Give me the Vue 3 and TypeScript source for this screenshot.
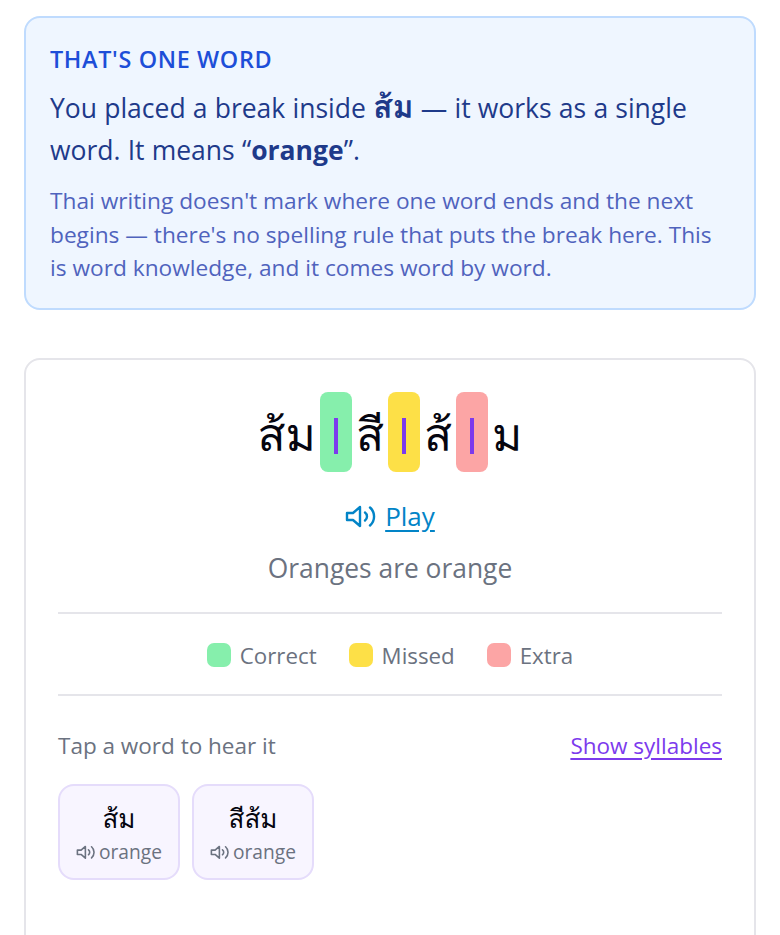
<script setup lang="ts">
interface Tile { thai: string; en: string }
const tiles: Tile[] = [
  { thai: 'ส้ม', en: 'orange' },
  { thai: 'สีส้ม', en: 'orange' },
]
const legend = [
  { label: 'Correct', cls: 'green' },
  { label: 'Missed', cls: 'yellow' },
  { label: 'Extra', cls: 'red' },
]
</script>

<template>
  <div class="page">
    <section class="note">
      <div class="note-label">THAT'S ONE WORD</div>
      <p class="note-main">You placed a break inside <b class="thai-bold">ส้ม</b> — it works as a single word. It means “<b>orange</b>”.</p>
      <p class="note-sub">Thai writing doesn't mark where one word ends and the next begins — there's no spelling rule that puts the break here. This is word knowledge, and it comes word by word.</p>
    </section>

    <section class="card">
      <div class="sentence">
        <span class="seg">ส้ม</span>
        <span class="brk green"><i></i></span>
        <span class="seg">สี</span>
        <span class="brk yellow"><i></i></span>
        <span class="seg">ส้</span>
        <span class="brk red"><i></i></span>
        <span class="seg">ม</span>
      </div>
      <div class="play">
        <svg width="32" height="26" viewBox="0 0 32 26" fill="none" stroke="currentColor" stroke-width="2.4" stroke-linecap="round" stroke-linejoin="round">
          <path d="M15 4 8 10H2v7h6l7 6z" />
          <path d="M20 9.5a5 5 0 0 1 0 8" />
          <path d="M25 4.5a12 12 0 0 1 0 18" />
        </svg>
        <span class="play-text">Play</span>
      </div>
      <div class="translation">Oranges are orange</div>
      <div class="legend">
        <div v-for="l in legend" :key="l.label" class="legend-item">
          <span class="dot" :class="l.cls"></span><span class="legend-text">{{ l.label }}</span>
        </div>
      </div>
      <div class="row">
        <span class="hint">Tap a word to hear it</span>
        <span class="toggle">Show syllables</span>
      </div>
      <div class="tiles">
        <div v-for="t in tiles" :key="t.thai" class="tile">
          <div class="tile-thai">{{ t.thai }}</div>
          <div class="tile-en">
            <svg width="20" height="16" viewBox="0 0 32 26" fill="none" stroke="currentColor" stroke-width="2.6" stroke-linecap="round" stroke-linejoin="round">
              <path d="M15 4 8 10H2v7h6l7 6z" />
              <path d="M20 9.5a5 5 0 0 1 0 8" />
              <path d="M25 4.5a12 12 0 0 1 0 18" />
            </svg>
            {{ t.en }}
          </div>
        </div>
      </div>
    </section>
  </div>
</template>

<style>
html, body { margin: 0; background: #fff; overflow: hidden; }
</style>

<style scoped>
.page {
  height: 935px;
  overflow: hidden;
  padding: 16px 24px 0;
  box-sizing: border-box;
  font-family: "Open Sans", "Loma", "Noto Sans CJK SC", sans-serif;
}
.note {
  background: #eff6ff;
  border: 2px solid #bfdbfe;
  border-radius: 16px;
  padding: 25px 24px 25px;
  height: 294px;
  box-sizing: border-box;
}
.note-label {
  color: #1d4ed8;
  font-size: 23.4px;
  font-weight: 600;
  line-height: 32px;
  letter-spacing: 0.65px;
}
.note-main {
  margin: 12px 0 0;
  color: #1e3a8a;
  font-size: 26.5px;
  line-height: 42px;
  word-spacing: 0.3px;
}
.note-main b { font-weight: 700; }
.note-main .thai-bold { font-size: 32px; line-height: 1; }
.note-sub {
  margin: 13px 0 0;
  color: #4f63bd;
  font-size: 22.7px;
  line-height: 33.5px;
}
.card {
  margin-top: 48px;
  border: 2px solid #e5e5ea;
  border-radius: 16px;
  padding: 32px 32px 0;
  height: 640px;
  box-sizing: border-box;
}
.sentence {
  display: flex;
  justify-content: center;
  align-items: center;
  gap: 4px;
  height: 80px;
  font-size: 46px;
  color: #05050f;
}
.seg { padding-top: 4px; }
.brk {
  width: 32px;
  height: 80px;
  border-radius: 8px;
  display: flex;
  align-items: center;
  justify-content: center;
}
.brk i {
  display: block;
  width: 4.5px;
  height: 36px;
  margin-top: 8px;
  background: #7c3aed;
}
.green { background: #86efac; }
.yellow { background: #fde047; }
.red { background: #fca5a5; }
.play {
  margin-top: 26px;
  height: 36px;
  display: flex;
  justify-content: center;
  align-items: center;
  gap: 8px;
  color: #0284c7;
  font-size: 26px;
}
.play-text { text-decoration: underline; text-underline-offset: 4px; }
.translation {
  margin-top: 16px;
  text-align: center;
  color: #6b7280;
  font-size: 26.4px;
  line-height: 36px;
  padding-bottom: 26px;
  border-bottom: 2px solid #e5e5ea;
}
.legend {
  display: flex;
  justify-content: center;
  gap: 32px;
  height: 80px;
  box-sizing: content-box;
  align-items: center;
  border-bottom: 2px solid #e5e5ea;
}
.legend-item {
  display: flex;
  align-items: center;
  gap: 9px;
  margin-top: 2px;
  color: #6b7280;
  font-size: 22.3px;
}
.legend-text { line-height: 30px; margin-top: 2px; }
.dot {
  width: 24px;
  height: 24px;
  border-radius: 7px;
}
.row {
  margin-top: 34px;
  display: flex;
  justify-content: space-between;
  align-items: center;
  font-size: 22.5px;
  line-height: 32px;
}
.hint { color: #6b7280; }
.toggle { color: #7c3aed; text-decoration: underline; text-underline-offset: 4px; }
.tiles {
  display: flex;
  gap: 12px;
  margin-top: 22px;
}
.tile {
  width: 122px;
  height: 96px;
  box-sizing: border-box;
  background: #f8f5ff;
  border: 2px solid #e5dcfb;
  border-radius: 16px;
  display: flex;
  flex-direction: column;
  align-items: center;
  justify-content: center;
}
.tile-thai {
  font-size: 26px;
  line-height: 36px;
  color: #05050f;
}
.tile-en {
  display: flex;
  align-items: center;
  gap: 3px;
  margin-top: 3px;
  font-size: 19.2px;
  line-height: 26px;
  color: #6b7280;
}
</style>
